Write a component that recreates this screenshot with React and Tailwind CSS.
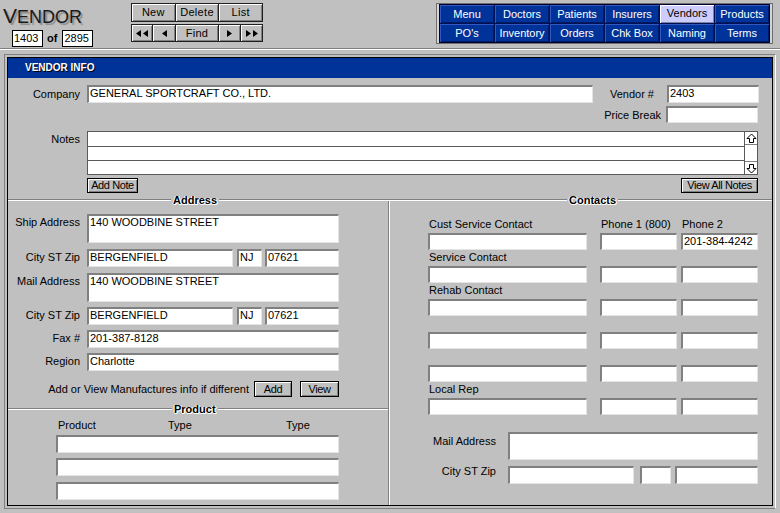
import React from "react";

const FIELD =
  "bg-white border-t-2 border-l-2 border-t-[#808080] border-l-[#808080] border-b border-r border-b-[#e4e4e4] border-r-[#e4e4e4] pl-[1px] leading-[13px] whitespace-nowrap overflow-hidden text-black";

function Field({ className = "", children }) {
  return <div className={FIELD + " " + className}>{children}</div>;
}

const BTN =
  "flex items-center justify-center bg-[#c0c0c0] border border-black shadow-[inset_1px_1px_0_#ffffff,inset_-1px_-1px_0_#808080] leading-none tracking-[-0.4px] whitespace-nowrap";

function Btn({ className = "", children }) {
  return <div className={BTN + " " + className}>{children}</div>;
}

const GROOVE = "h-0 border-t border-t-[#808080] border-b border-b-white";

function Heading({ lineClass, title }) {
  return (
    <div className="flex items-center h-[14px]">
      <div className={GROOVE + " " + lineClass} />
      <span className="px-[2px] font-bold leading-[13px] [text-shadow:1px_1px_0_#fff,1px_0_0_#fff,0_1px_0_#fff,-1px_0_0_#fff]">
        {title}
      </span>
      <div className={GROOVE + " flex-1"} />
    </div>
  );
}

const NAVBTN =
  "flex items-center justify-center bg-[#c0c0c0] shadow-[inset_1px_1px_0_#ffffff,inset_-1px_-1px_0_#808080] tracking-[0.3px] leading-none";

const MENU = [
  "Menu",
  "Doctors",
  "Patients",
  "Insurers",
  "Vendors",
  "Products",
  "PO's",
  "Inventory",
  "Orders",
  "Chk Box",
  "Naming",
  "Terms",
];

function LeftTri() {
  return (
    <svg width="5" height="7" viewBox="0 0 5 7">
      <path d="M0 3.5L5 0V7Z" fill="#000" />
    </svg>
  );
}
function RightTri() {
  return (
    <svg width="5" height="7" viewBox="0 0 5 7">
      <path d="M5 3.5L0 0V7Z" fill="#000" />
    </svg>
  );
}

function ScrollArrow({ down }) {
  return (
    <svg width="11" height="11" viewBox="0 0 11 11" className={down ? "rotate-180" : ""}>
      <polygon
        points="5.5,1 10,5.5 7.5,5.5 7.5,9.5 3.5,9.5 3.5,5.5 1,5.5"
        fill="none"
        stroke="#000"
        strokeWidth="1"
      />
    </svg>
  );
}

const CONTACTS = [
  ["Cust Service Contact", "Phone 1 (800)", "Phone 2", "", "201-384-4242"],
  ["Service Contact", "", "", "", ""],
  ["Rehab Contact", "", "", "", ""],
  ["", "", "", "", ""],
  ["", "", "", "", ""],
  ["Local Rep", "", "", "", ""],
];

function CityRow({ className = "", city, st, zip }) {
  return (
    <div className={"flex items-start " + className}>
      <div className="w-[72px] text-right pt-[1px] leading-[14px]">City ST Zip</div>
      <Field className="ml-[7px] w-[146px] h-[18px]">{city}</Field>
      <Field className="ml-[4px] w-[25px] h-[18px]">{st}</Field>
      <Field className="ml-[3px] w-[74px] h-[18px]">{zip}</Field>
    </div>
  );
}

function LabelRow({ className = "", label, children }) {
  return (
    <div className={"flex items-start " + className}>
      <div className="w-[72px] text-right pt-[1px] leading-[14px] whitespace-nowrap">{label}</div>
      <div className="ml-[7px]">{children}</div>
    </div>
  );
}

export default function App() {
  return (
    <div className="w-[780px] h-[513px] bg-[#c0c0c0] overflow-hidden font-['Liberation_Sans',Arial,sans-serif] text-[11px] text-black">
      {/* Header */}
      <div className="flex h-[48px]">
        <div className="w-[131px] shrink-0">
          <div className="pt-[5px] pl-[3px] flex items-baseline leading-none text-[#1a1a1a] [text-shadow:2px_2px_1px_#8c8c8c]">
            <span className="text-[21px]">V</span>
            <span className="text-[18px]">ENDOR</span>
          </div>
          <div className="mt-[4px] pl-[12px] flex items-center h-[17px]">
            <div className="w-[31px] h-[17px] border border-black bg-white pl-[1px] leading-[15px]">1403</div>
            <span className="ml-[4px] font-bold leading-none">of</span>
            <div className="ml-[5px] w-[31px] h-[17px] border border-black bg-white pl-[1px] leading-[15px]">2895</div>
          </div>
        </div>

        <div className="mt-[3px] w-[132px] flex flex-col gap-[2px]">
          <div className="h-[19px] flex border border-[#202020] bg-[#202020] gap-px">
            <div className={NAVBTN + " flex-1"}>New</div>
            <div className={NAVBTN + " flex-1"}>Delete</div>
            <div className={NAVBTN + " flex-1"}>List</div>
          </div>
          <div className="h-[18px] flex border border-[#202020] bg-[#202020] gap-px">
            <div className={NAVBTN + " w-[20px] gap-[2px]"}>
              <LeftTri />
              <LeftTri />
            </div>
            <div className={NAVBTN + " w-[22px]"}>
              <LeftTri />
            </div>
            <div className={NAVBTN + " flex-1"}>Find</div>
            <div className={NAVBTN + " w-[21px]"}>
              <RightTri />
            </div>
            <div className={NAVBTN + " w-[21px] gap-[2px]"}>
              <RightTri />
              <RightTri />
            </div>
          </div>
        </div>

        <div className="ml-[173px] mt-[3px] h-[41px] border border-[#6e6e6e] bg-[#d4d4d4] px-[2px]">
          <div className="border border-[#000033] bg-[#001055] grid grid-cols-[repeat(6,54px)] grid-rows-[18px_18px] gap-px">
            {MENU.map((m) =>
              m === "Vendors" ? (
                <div
                  key={m}
                  className="flex items-center justify-center bg-[#ccccff] text-black leading-none pb-[2px] shadow-[inset_1px_1px_0_#ffffff,inset_-1px_-1px_0_#8080a0]"
                >
                  {m}
                </div>
              ) : (
                <div
                  key={m}
                  className="flex items-center justify-center bg-[#003399] text-white leading-none shadow-[inset_1px_1px_0_#3358c0,inset_-1px_-1px_0_#001a66]"
                >
                  {m}
                </div>
              )
            )}
          </div>
        </div>
      </div>

      {/* separator */}
      <div className={GROOVE + " w-full"} />

      {/* Panel */}
      <div className="mt-[4px] ml-[4px] w-[772px] h-[455px] border border-t-[#808080] border-l-[#808080] border-b-[#808080] border-r-white p-[2px] flex flex-col">
        <div className="flex-1 border border-black flex flex-col">
          <div className="h-[20px] bg-[#003399] flex items-center pl-[17px] text-white font-bold text-[10px] leading-none [text-shadow:1px_1px_0_#000]">
            VENDOR INFO
          </div>

          <div className="flex-1 flex flex-col">
            {/* Top section */}
            <div className="mt-[7px] flex items-center h-[18px]">
              <div className="w-[72px] text-right leading-[14px]">Company</div>
              <Field className="ml-[7px] w-[506px] h-[18px]">GENERAL SPORTCRAFT CO., LTD.</Field>
              <div className="w-[61px] text-right leading-[14px]">Vendor #</div>
              <Field className="ml-[13px] w-[92px] h-[18px]">2403</Field>
            </div>
            <div className="mt-[3px] flex items-center h-[17px]">
              <div className="w-[658px] text-right pr-[5px] leading-[14px]">Price Break</div>
              <Field className="w-[92px] h-[17px]" />
            </div>
            <div className="mt-[8px] flex items-start">
              <div className="w-[72px] text-right pt-[1px] leading-[14px]">Notes</div>
              <div className="ml-[7px] w-[671px] h-[44px] border border-[#5a5a5a] bg-white flex">
                <div className="flex-1 flex flex-col">
                  <div className="h-[15px] border-b border-b-[#5a5a5a]" />
                  <div className="h-[14px] border-b border-b-[#5a5a5a]" />
                  <div className="h-[13px]" />
                </div>
                <div className="w-[13px] border-l border-l-[#5a5a5a] flex flex-col justify-between">
                  <div className="h-[13px] border-b border-b-[#808080] flex items-center justify-center">
                    <ScrollArrow />
                  </div>
                  <div className="h-[13px] border-t border-t-[#808080] flex items-center justify-center">
                    <ScrollArrow down />
                  </div>
                </div>
              </div>
            </div>
            <div className="mt-[3px] h-[15px] flex">
              <Btn className="ml-[79px] w-[51px] h-[15px]">Add Note</Btn>
              <Btn className="ml-auto mr-[14px] w-[77px] h-[15px]">View All Notes</Btn>
            </div>

            {/* Middle */}
            <div className="flex-1 flex">
              {/* Left column */}
              <div className="w-[380px] flex flex-col">
                <Heading lineClass="w-[163px]" title="Address" />
                <LabelRow className="mt-[7px]" label="Ship Address">
                  <Field className="w-[252px] h-[29px]">140 WOODBINE STREET</Field>
                </LabelRow>
                <CityRow className="mt-[6px]" city="BERGENFIELD" st="NJ" zip="07621" />
                <LabelRow className="mt-[6px]" label="Mail Address">
                  <Field className="w-[252px] h-[29px]">140 WOODBINE STREET</Field>
                </LabelRow>
                <CityRow className="mt-[5px]" city="BERGENFIELD" st="NJ" zip="07621" />
                <LabelRow className="mt-[5px]" label="Fax #">
                  <Field className="w-[252px] h-[18px]">201-387-8128</Field>
                </LabelRow>
                <LabelRow className="mt-[5px]" label="Region">
                  <Field className="w-[252px] h-[18px]">Charlotte</Field>
                </LabelRow>
                <div className="mt-[10px] w-[331px] h-[16px] flex items-center justify-end">
                  <span className="whitespace-nowrap leading-[14px]">Add or View Manufactures info if different</span>
                  <Btn className="ml-[5px] w-[38px] h-[16px]">Add</Btn>
                  <Btn className="ml-[8px] w-[39px] h-[16px]">View</Btn>
                </div>
                <div className="mt-[5px]">
                  <Heading lineClass="w-[164px]" title="Product" />
                </div>
                <div className="mt-[2px] h-[14px] leading-[14px] flex pl-[50px]">
                  <span className="w-[110px]">Product</span>
                  <span className="w-[118px]">Type</span>
                  <span>Type</span>
                </div>
                <Field className="mt-[3px] ml-[48px] w-[283px] h-[18px]" />
                <Field className="mt-[5px] ml-[48px] w-[283px] h-[18px]" />
                <Field className="mt-[6px] ml-[48px] w-[283px] h-[18px]" />
              </div>

              {/* Vertical groove */}
              <div className="w-[2px] flex flex-col">
                <div className="h-[6px]" />
                <div className="h-[1px] bg-[#808080]" />
                <div className="h-[1px] bg-white" />
                <div className="flex-1 border-l border-l-[#808080] border-r border-r-white" />
              </div>

              {/* Right column */}
              <div className="flex-1 flex flex-col">
                <Heading lineClass="w-[177px]" title="Contacts" />
                <div className="mt-[10px] pl-[38px] flex flex-col">
                  {CONTACTS.map((c, i) => (
                    <div key={i} className="flex flex-col">
                      <div className="h-[14px] leading-[14px] flex whitespace-nowrap">
                        <span className="w-[172px] pl-[1px]">{c[0]}</span>
                        <span className="w-[81px] pl-[1px]">{c[1]}</span>
                        <span className="pl-[1px]">{c[2]}</span>
                      </div>
                      <div className="mt-[2px] flex">
                        <Field className="w-[159px] h-[17px]">{c[3]}</Field>
                        <Field className="ml-[13px] w-[77px] h-[17px]" />
                        <Field className="ml-[4px] w-[77px] h-[17px]">{c[4]}</Field>
                      </div>
                    </div>
                  ))}
                </div>
                <div className="mt-[17px] flex items-start">
                  <div className="w-[106px] text-right pt-[2px] leading-[14px]">Mail Address</div>
                  <Field className="ml-[12px] w-[250px] h-[28px]" />
                </div>
                <div className="mt-[6px] flex items-start">
                  <div className="w-[106px] text-right -mt-[2px] leading-[14px]">City ST Zip</div>
                  <Field className="ml-[12px] w-[126px] h-[18px]" />
                  <Field className="ml-[6px] w-[31px] h-[18px]" />
                  <Field className="ml-[4px] w-[83px] h-[18px]" />
                </div>
              </div>
            </div>
          </div>
        </div>
      </div>
    </div>
  );
}
